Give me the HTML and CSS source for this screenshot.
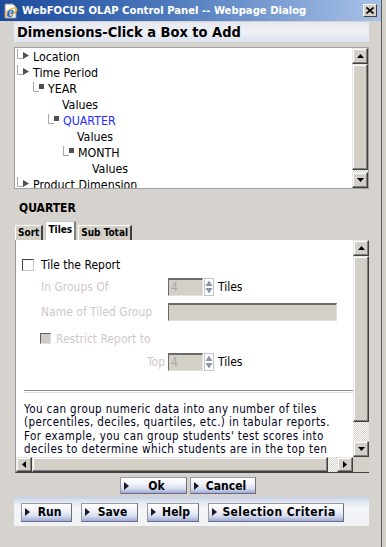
FILE: index.html
```html
<!DOCTYPE html>
<html>
<head>
<meta charset="utf-8">
<link rel="stylesheet" href="styles.css">
</head>
<body>
<div class="window">
  <div class="titlebar">
    <svg class="ie-icon" width="16" height="16" viewBox="0 0 16 16">
      <path d="M2 1h8l3 3v11H2z" fill="#fff" stroke="#8a8a8a"/>
      <ellipse cx="8" cy="9" rx="6.5" ry="2.6" fill="none" stroke="#e8b020" stroke-width="1.4" transform="rotate(-30 8 9)"/>
      <text x="3.6" y="13.5" font-family="DejaVu Serif, serif" font-weight="bold" font-style="italic" font-size="12" fill="#1a5fd0">e</text>
    </svg>
    <span class="title">WebFOCUS OLAP Control Panel -- Webpage Dialog</span>
    <span class="close-btn">
      <svg width="8" height="7" viewBox="0 0 8 7"><path d="M0.5 0.5L7.5 6.5M7.5 0.5L0.5 6.5" stroke="#000" stroke-width="1.6"/></svg>
    </span>
  </div>

  <div class="content">
    <div class="header">Dimensions-Click a Box to Add</div>

    <div class="tree-box">
      <div class="tree">
        <div class="row l0"><svg class="ico" width="16" height="16" viewBox="0 0 16 16"><path d="M0.5 0v9.5H7" fill="none" stroke="#a8a8a8"/><path d="M6 3l6 3.5-6 3.5z" fill="#505050"/></svg>Location</div>
        <div class="row l0"><svg class="ico" width="16" height="16" viewBox="0 0 16 16"><path d="M0.5 0v9.5H7" fill="none" stroke="#a8a8a8"/><path d="M6 3l6 3.5-6 3.5z" fill="#505050"/></svg>Time Period</div>
        <div class="row l1"><svg class="ico sq" width="15" height="16" viewBox="0 0 15 16"><path d="M0.5 1v9.5H6" fill="none" stroke="#a8a8a8"/><rect x="6" y="3" width="5" height="5" fill="#505050"/></svg>YEAR</div>
        <div class="row v1">Values</div>
        <div class="row l2 sel"><svg class="ico sq" width="15" height="16" viewBox="0 0 15 16"><path d="M0.5 1v9.5H6" fill="none" stroke="#a8a8a8"/><rect x="6" y="3" width="5" height="5" fill="#505050"/></svg>QUARTER</div>
        <div class="row v2">Values</div>
        <div class="row l3"><svg class="ico sq" width="15" height="16" viewBox="0 0 15 16"><path d="M0.5 1v9.5H6" fill="none" stroke="#a8a8a8"/><rect x="6" y="3" width="5" height="5" fill="#505050"/></svg>MONTH</div>
        <div class="row v3">Values</div>
        <div class="row l0"><svg class="ico" width="16" height="16" viewBox="0 0 16 16"><path d="M0.5 0v9.5H7" fill="none" stroke="#a8a8a8"/><path d="M6 3l6 3.5-6 3.5z" fill="#505050"/></svg>Product Dimension</div>
      </div>
      <div class="vscroll tree-scroll">
        <div class="sbtn"><svg width="7" height="4" viewBox="0 0 7 4"><path d="M3.5 0L7 4H0z" fill="#000"/></svg></div>
        <div class="thumb grow"></div>
        <div class="track small"></div>
        <div class="sbtn"><svg width="7" height="4" viewBox="0 0 7 4"><path d="M0 0h7L3.5 4z" fill="#000"/></svg></div>
      </div>
    </div>

    <div class="section-label">QUARTER</div>

    <div class="tabs">
      <div class="tab">Sort</div>
      <div class="tab active">Tiles</div>
      <div class="tab">Sub Total</div>
    </div>

    <div class="panel">
      <div class="panel-main">
        <div class="panel-body">
          <div class="f-row r-tile">
            <span class="checkbox"></span>
            <span class="lbl-on">Tile the Report</span>
          </div>
          <div class="f-row r-groups">
            <span class="lbl-off lbl-col">In Groups Of</span>
            <span class="inp small-inp">4</span>
            <span class="spin">
              <svg width="8" height="16" viewBox="0 0 8 16"><path d="M4 1.5L7.5 7H0.5z" fill="#8c95a8"/><path d="M0.5 9h7L4 14.5z" fill="#8c95a8"/></svg>
            </span>
            <span class="lbl-on tiles">Tiles</span>
          </div>
          <div class="f-row r-name">
            <span class="lbl-off lbl-col">Name of Tiled Group</span>
            <span class="inp wide-inp"></span>
          </div>
          <div class="f-row r-restrict">
            <span class="checkbox disabled"></span>
            <span class="lbl-off">Restrict Report to</span>
          </div>
          <div class="f-row r-top">
            <span class="lbl-off lbl-col right">Top</span>
            <span class="inp small-inp">4</span>
            <span class="spin">
              <svg width="8" height="16" viewBox="0 0 8 16"><path d="M4 1.5L7.5 7H0.5z" fill="#8c95a8"/><path d="M0.5 9h7L4 14.5z" fill="#8c95a8"/></svg>
            </span>
            <span class="lbl-on tiles">Tiles</span>
          </div>
          <div class="divider"></div>
          <p class="help">You can group numeric data into any number of tiles<br>(percentiles, deciles, quartiles, etc.) in tabular reports.<br>For example, you can group students' test scores into<br>deciles to determine which students are in the top ten</p>
        </div>
        <div class="vscroll panel-scroll">
          <div class="sbtn"><svg width="7" height="4" viewBox="0 0 7 4"><path d="M3.5 0L7 4H0z" fill="#000"/></svg></div>
          <div class="thumb grow"></div>
          <div class="track dither-v"></div>
          <div class="sbtn"><svg width="7" height="4" viewBox="0 0 7 4"><path d="M0 0h7L3.5 4z" fill="#000"/></svg></div>
        </div>
      </div>
      <div class="hscroll-row">
        <div class="hscroll">
          <div class="sbtn"><svg width="4" height="7" viewBox="0 0 4 7"><path d="M0 3.5L4 0v7z" fill="#000"/></svg></div>
          <div class="thumb grow"></div>
          <div class="track dither-h"></div>
          <div class="sbtn"><svg width="4" height="7" viewBox="0 0 4 7"><path d="M0 0l4 3.5L0 7z" fill="#000"/></svg></div>
        </div>
        <div class="corner"></div>
      </div>
    </div>

    <div class="ok-row">
      <button class="btn ok">Ok</button>
      <button class="btn cancel">Cancel</button>
    </div>

    <div class="band">
      <button class="btn run">Run</button>
      <button class="btn save">Save</button>
      <button class="btn help-btn">Help</button>
      <button class="btn crit">Selection Criteria</button>
    </div>
  </div>
</div>
</body>
</html>
```

FILE: styles.css
```css
html, body {
  margin: 0;
  padding: 0;
}
body {
  background: #d4d0c8;
  font-family: "DejaVu Sans Condensed", "DejaVu Sans", sans-serif;
  width: 386px;
  height: 547px;
  overflow: hidden;
}
.window {
  width: 382px;
  height: 547px;
  box-sizing: border-box;
  border-right: 1px solid #5a5a5a;
  background: #d6d3ce;
}

/* title bar */
.titlebar {
  height: 21px;
  display: flex;
  align-items: center;
  background: linear-gradient(to right, #1b4a9c 0%, #4f7bbd 45%, #a8c1e8 100%);
  padding-left: 3px;
  box-sizing: border-box;
}
.ie-icon {
  flex: none;
  margin-right: 3px;
}
.title {
  color: #fff;
  font-weight: bold;
  font-size: 11.2px;
  white-space: nowrap;
  flex: 1;
}
.close-btn {
  flex: none;
  width: 14px;
  height: 13px;
  margin-right: 4px;
  box-sizing: border-box;
  background: #d4d0c8;
  border-top: 1px solid #fff;
  border-left: 1px solid #fff;
  border-right: 1px solid #404040;
  border-bottom: 1px solid #404040;
  display: flex;
  align-items: center;
  justify-content: center;
}

/* content */
.content {
  padding-left: 14px;
  width: 355px;
}
.header {
  margin-top: 1px;
  height: 20px;
  line-height: 20px;
  padding-left: 3px;
  font-weight: bold;
  font-size: 14.5px;
  color: #000;
  background: linear-gradient(to bottom, #e7e8ee 0%, #eef0f5 50%, #dbe2ef 100%);
  white-space: nowrap;
}

/* tree */
.tree-box {
  margin-top: 5px;
  height: 142px;
  display: flex;
  background: #fff;
  border: 1px solid #a0a0a0;
  box-sizing: border-box;
}
.tree {
  flex: 1;
  overflow: hidden;
  padding-top: 1px;
  padding-left: 2px;
  font-size: 12.3px;
  color: #000;
}
.row {
  height: 16px;
  line-height: 16px;
  display: flex;
  align-items: center;
  white-space: nowrap;
}
.ico {
  flex: none;
  display: block;
}
.l0 { padding-left: 0; }
.l1 { padding-left: 16px; }
.l2 { padding-left: 31px; }
.l3 { padding-left: 46px; }
.v1 { padding-left: 45px; }
.v2 { padding-left: 60px; }
.v3 { padding-left: 75px; }
.sel { color: #2a2aff; }

/* scrollbars */
.vscroll {
  width: 16px;
  flex: none;
  display: flex;
  flex-direction: column;
  background: #d4d0c8;
}
.sbtn {
  flex: none;
  width: 16px;
  height: 16px;
  box-sizing: border-box;
  background: #d4d0c8;
  border-top: 1px solid #e8e6e2;
  border-left: 1px solid #e8e6e2;
  border-right: 1px solid #404040;
  border-bottom: 1px solid #404040;
  box-shadow: inset -1px -1px 0 #808080, inset 1px 1px 0 #fff;
  display: flex;
  align-items: center;
  justify-content: center;
}
.thumb {
  box-sizing: border-box;
  background: #d4d0c8;
  border-top: 1px solid #e8e6e2;
  border-left: 1px solid #e8e6e2;
  border-right: 1px solid #404040;
  border-bottom: 1px solid #404040;
  box-shadow: inset -1px -1px 0 #808080, inset 1px 1px 0 #fff;
}
.grow { flex: 1; }
.track {
  flex: none;
  background-color: #d4d0c8;
  background-image: repeating-conic-gradient(#fff 0 25%, #d4d0c8 0 50%);
  background-size: 2px 2px;
}
.track.small { height: 2px; }
.dither-v { height: 19px; }
.dither-h { width: 9px; }

/* section label and tabs */
.section-label {
  margin-top: 11px;
  padding-left: 5px;
  height: 16px;
  line-height: 16px;
  font-weight: bold;
  font-size: 12px;
  color: #000;
}
.tabs {
  margin-top: 6px;
  height: 18px;
  display: flex;
  align-items: flex-end;
  gap: 2px;
  padding-left: 1px;
}
.tab {
  height: 14px;
  line-height: 14px;
  padding: 0 2px;
  font-size: 10px;
  font-weight: bold;
  color: #000;
  background: #d4d0c8;
  border-top: 1px solid #fff;
  border-left: 1px solid #fff;
  border-right: 2px solid #404040;
  white-space: nowrap;
}
.tab.active {
  height: 18px;
  line-height: 15px;
  padding: 0 2px;
  background: #fff;
  border-right: 2px solid #808080;
  border-top: 1px solid #c8c8c8;
  border-left: 1px solid #c8c8c8;
}

/* panel */
.panel {
  margin-left: 1px;
  width: 354px;
  height: 233px;
  display: flex;
  flex-direction: column;
  border-left: 1px solid #9a9a9a;
  border-bottom: 1px solid #404040;
  box-sizing: border-box;
}
.panel-main {
  flex: 1;
  display: flex;
  min-height: 0;
}
.panel-body {
  flex: 1;
  background: #fff;
  overflow: hidden;
  font-size: 12px;
  min-width: 0;
}
.hscroll-row {
  height: 15px;
  display: flex;
  flex: none;
}
.hscroll {
  flex: 1;
  display: flex;
}
.hscroll .sbtn {
  height: 15px;
}
.corner {
  width: 16px;
  background: #d4d0c8;
}

/* form */
.f-row {
  display: flex;
  align-items: center;
  white-space: nowrap;
}
.r-tile {
  margin-top: 18px;
  height: 14px;
  padding-left: 6px;
}
.r-tile .checkbox {
  margin-right: 7px;
}
.checkbox {
  flex: none;
  width: 12px;
  height: 12px;
  box-sizing: border-box;
  border-top: 1px solid #404040;
  border-left: 1px solid #404040;
  border-right: 1px solid #c8c8c8;
  border-bottom: 1px solid #c8c8c8;
  background: #fff;
}
.checkbox.disabled {
  width: 11px;
  height: 11px;
  background: #cfccc6;
  border-top: 1px solid #606060;
  border-left: 1px solid #606060;
  border-right: 1px solid #e0e0e0;
  border-bottom: 1px solid #e0e0e0;
  margin-right: 5px;
}
.lbl-on {
  color: #000;
}
.lbl-off {
  color: #d0c8c8;
}
.lbl-col {
  width: 127px;
  flex: none;
}
.right {
  text-align: right;
  padding-right: 3px;
  box-sizing: border-box;
}
.r-groups {
  margin-top: 6px;
  height: 18px;
  padding-left: 25px;
}
.r-name {
  margin-top: 7px;
  height: 18px;
  padding-left: 25px;
}
.r-restrict {
  margin-top: 11px;
  height: 13px;
  padding-left: 24px;
}
.r-top {
  margin-top: 8px;
  height: 18px;
  padding-left: 25px;
}
.inp {
  flex: none;
  height: 18px;
  box-sizing: border-box;
  background: #d4d0c8;
  border-top: 2px solid #6a6a6a;
  border-left: 1px solid #6a6a6a;
  border-right: 1px solid #e2e0dc;
  border-bottom: 1px solid #e2e0dc;
  color: #a8a8a8;
  font-size: 12px;
  line-height: 15px;
  padding-left: 2px;
}
.small-inp { width: 35px; }
.wide-inp { width: 169px; }
.spin {
  flex: none;
  width: 10px;
  height: 18px;
  margin-left: 1px;
  box-sizing: border-box;
  border: 1px solid #c0c4cc;
  background: #fff;
  display: flex;
  align-items: center;
  justify-content: center;
}
.tiles {
  margin-left: 4px;
}
.divider {
  margin-top: 19px;
  margin-left: 8px;
  height: 1px;
  border-top: 1px solid #8a8a8a;
  border-bottom: 1px solid #e0e0e0;
}
.help {
  margin: 10px 0 0 8px;
  font-size: 11.5px;
  line-height: 13.4px;
  letter-spacing: 0.4px;
  color: #000020;
  white-space: nowrap;
}

/* buttons */
.ok-row {
  display: flex;
  gap: 3px;
  padding-left: 106px;
  margin-top: 4px;
  height: 17px;
}
.btn {
  position: relative;
  margin: 0;
  padding: 0 0 0 6px;
  height: 17px;
  box-sizing: border-box;
  font-family: "DejaVu Sans Condensed", "DejaVu Sans", sans-serif;
  font-weight: bold;
  font-size: 12px;
  color: #000;
  border: 1px solid #9a9a9a;
  border-right-color: #707070;
  border-bottom-color: #6a6a8a;
  background: linear-gradient(to bottom, #ffffff 0%, #f2f4f9 35%, #d8def0 70%, #9eabd4 100%);
  text-align: center;
  white-space: nowrap;
}
.btn::before {
  content: "";
  position: absolute;
  left: 3px;
  top: 50%;
  margin-top: -4px;
  border-left: 5px solid #1a1a2a;
  border-top: 4px solid transparent;
  border-bottom: 4px solid transparent;
}
.ok { width: 67px; }
.cancel { width: 66px; }
.band {
  margin-top: 3px;
  height: 29px;
  display: flex;
  align-items: center;
  gap: 9px;
  padding-left: 7px;
  background: linear-gradient(to bottom, #c3cfe6 0%, #e4e9f3 18%, #f4f5f8 40%, #f1f2f5 100%);
}
.band .btn {
  height: 19px;
  margin-top: 1px;
}
.run { width: 51px; }
.save { width: 57px; }
.help-btn { width: 52px; }
.crit { width: 136px; letter-spacing: 0.4px; }
```
